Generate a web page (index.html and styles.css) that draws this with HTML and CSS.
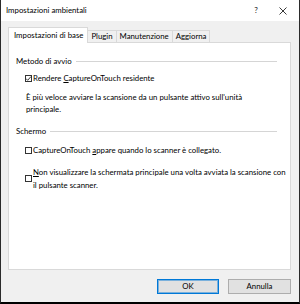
FILE: index.html
```html
<!DOCTYPE html>
<html>
<head>
<meta charset="utf-8">
<link rel="stylesheet" href="styles.css">
</head>
<body>
<div class="window">
  <div class="titlebar">
    <span class="title">Impostazioni ambientali</span>
    <span class="tb-btn help">?</span>
    <span class="tb-btn close">
      <svg width="8" height="8" viewBox="0 0 8 8"><path d="M0.5 0.5 L7.5 7.5 M7.5 0.5 L0.5 7.5" stroke="#222" stroke-width="0.9" fill="none"/></svg>
    </span>
  </div>
  <div class="body">
    <div class="tabs">
      <div class="tab active">Impostazioni di base</div>
      <div class="tab">Plugin</div>
      <div class="tab">Manutenzione</div>
      <div class="tab">Aggiorna</div>
    </div>
    <div class="panel">
      <div class="group-head"><span>Metodo di avvio</span><span class="rule"></span></div>
      <div class="check-row first">
        <span class="box">
          <svg width="7" height="7" viewBox="0 0 7 7"><path d="M1 3.6 L2.7 5.3 L6 1.5" stroke="#222" stroke-width="0.9" fill="none"/></svg>
        </span>
        <span class="label">Rendere <u>C</u>aptureOnTouch residente</span>
      </div>
      <p class="note">È più veloce avviare la scansione da un pulsante attivo sull'unità principale.</p>
      <div class="group-head second"><span>Schermo</span><span class="rule"></span></div>
      <div class="check-row">
        <span class="box"></span>
        <span class="label">CaptureOnTouch <u>a</u>ppare quando lo scanner è collegato.</span>
      </div>
      <div class="check-row multi">
        <span class="box"></span>
        <span class="label"><u>N</u>on visualizzare la schermata principale una volta avviata la scansione con il pulsante scanner.</span>
      </div>
    </div>
    <div class="footer">
      <button class="btn default">OK</button>
      <button class="btn">Annulla</button>
    </div>
  </div>
</div>
</body>
</html>
```

FILE: styles.css
```css
html, body {
  margin: 0;
  padding: 0;
  background: #fff;
}
body {
  width: 300px;
  height: 304px;
  font-family: Lato, "Noto Sans", sans-serif;
  font-size: 7.8px;
  line-height: 11px;
  color: #000;
}
.window {
  box-sizing: border-box;
  width: 300px;
  height: 304px;
  border-left: 1px solid #2b2b2b;
  border-right: 1px solid #2b2b2b;
  border-bottom: 2px solid #000;
  display: flex;
  flex-direction: column;
}
.titlebar {
  height: 21px;
  background: #fff;
  display: flex;
  align-items: center;
  flex-shrink: 0;
}
.title {
  flex: 1;
  padding-left: 5px;
}
.tb-btn {
  display: flex;
  align-items: center;
  justify-content: center;
}
.help {
  width: 12px;
  margin-right: 17px;
  font-size: 8px;
  color: #222;
}
.close {
  width: 8px;
  margin-right: 12px;
}
.close svg {
  display: block;
}
.body {
  flex: 1;
  background: #f0f0f0;
  display: flex;
  flex-direction: column;
  padding: 0 8px 0 7px;
}
.tabs {
  display: flex;
  align-items: flex-end;
  height: 15px;
  margin-top: 6px;
  position: relative;
  z-index: 1;
}
.tab {
  box-sizing: border-box;
  height: 12px;
  line-height: 11px;
  padding: 0 3px;
  border: 1px solid #d9d9d9;
  border-bottom: none;
  border-left: none;
  background: #f0f0f0;
}
.tab.active {
  height: 16px;
  line-height: 14px;
  background: #fff;
  border-left: 1px solid #d9d9d9;
  padding: 0 4px 0 5px;
  margin-bottom: -1px;
}
.panel {
  box-sizing: border-box;
  height: 228px;
  background: #fff;
  border: 1px solid #d9d9d9;
  padding: 13px 13px 0 7px;
}
.group-head {
  display: flex;
  align-items: center;
  gap: 4px;
  height: 11px;
}
.group-head.second {
  margin-top: 11px;
}
.rule {
  flex: 1;
  height: 1px;
  background: #d5d5d5;
}
.check-row {
  display: flex;
  align-items: center;
  gap: 1px;
  margin: 8px -10px 0 9px;
}
.check-row.first {
  margin-top: 6px;
}
.check-row.multi {
  margin-top: 10px;
  line-height: 12.5px;
}
.box {
  box-sizing: border-box;
  width: 7px;
  height: 7px;
  border: 1px solid #333;
  background: #fff;
  flex-shrink: 0;
  position: relative;
}
.box svg {
  position: absolute;
  left: -1px;
  top: -1px;
  display: block;
}
.note {
  margin: 7px 4px 0 10px;
  line-height: 12px;
}
.footer {
  flex: 1;
  display: flex;
  justify-content: flex-end;
  align-items: center;
  gap: 9px;
}
.btn {
  box-sizing: border-box;
  width: 63px;
  height: 15px;
  font-family: inherit;
  font-size: 7.8px;
  line-height: 11px;
  background: #e1e1e1;
  border: 1px solid #adadad;
  padding: 0;
  color: #000;
}
.btn.default {
  width: 62px;
  border: 1px solid #0078d7;
  box-shadow: inset 0 0 0 1px rgba(0, 120, 215, 0.45);
}
```
